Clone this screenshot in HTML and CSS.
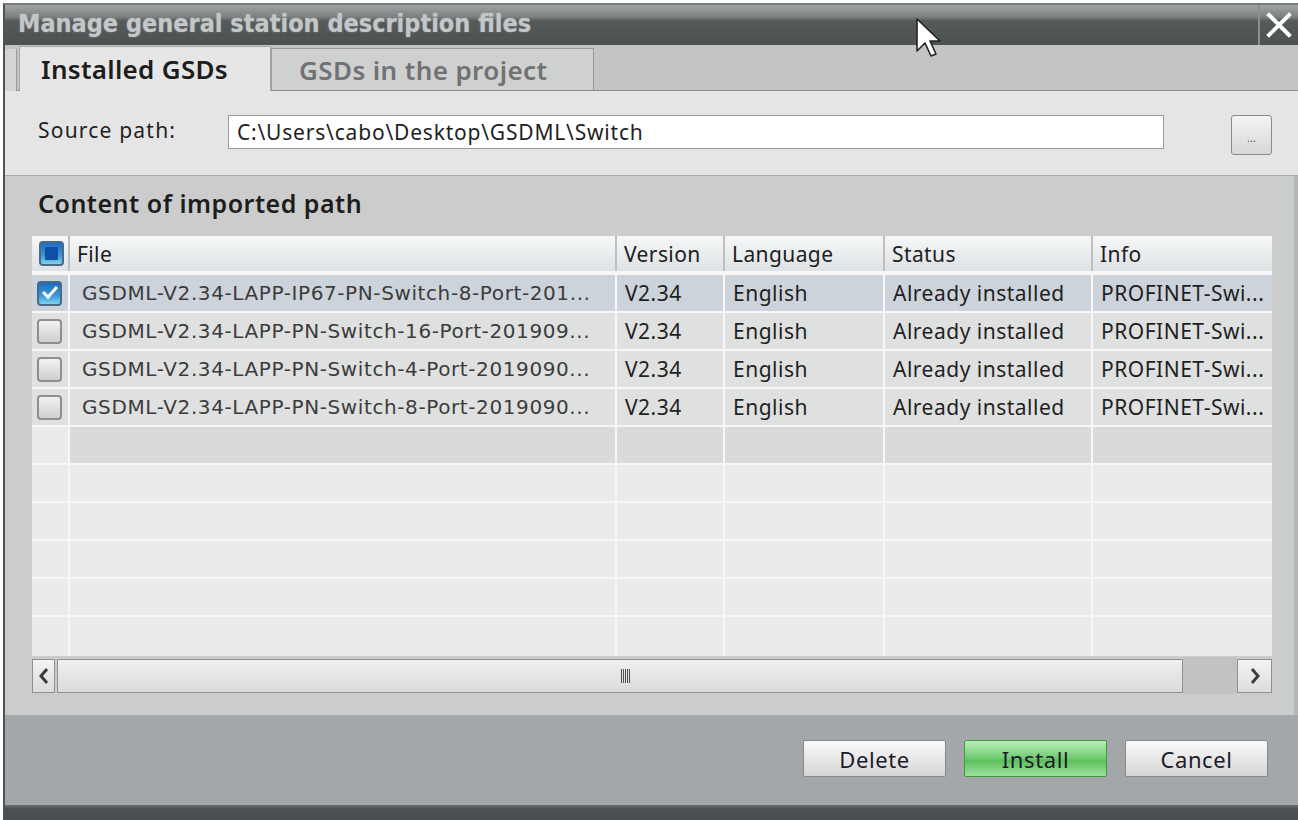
FILE: index.html
```html
<!DOCTYPE html>
<html lang="en">
<head>
<meta charset="utf-8">
<title>Manage general station description files</title>
<link rel="stylesheet" href="styles.css">
</head>
<body>
<div class="dialog">
  <div class="titlebar">
    <span class="title">Manage general station description files</span>
    <div class="close">
      <svg width="26" height="26" viewBox="0 0 26 26"><path d="M3 3 L23 23 M23 3 L3 23" stroke="#ffffff" stroke-width="4" stroke-linecap="square" fill="none"/></svg>
    </div>
  </div>
  <div class="tabs">
    <div class="tab-stub"></div>
    <div class="tab active">Installed GSDs</div>
    <div class="tab">GSDs in the project</div>
  </div>
  <div class="source">
    <span class="label">Source path:</span>
    <div class="path-input">C:\Users\cabo\Desktop\GSDML\Switch</div>
    <div class="browse">...</div>
  </div>
  <div class="content">
    <div class="heading">Content of imported path</div>
    <div class="grid">
      <div class="row head">
        <div class="cell chk"><span class="box tri"><span class="tri-in"></span></span></div>
        <div class="cell">File</div>
        <div class="cell">Version</div>
        <div class="cell">Language</div>
        <div class="cell">Status</div>
        <div class="cell">Info</div>
      </div>
      <div class="row data sel">
        <div class="cell chk"><span class="box on"><svg width="20" height="20" viewBox="0 0 20 20"><path d="M3 9 L8 14 L17 4" stroke="#ffffff" stroke-width="3" fill="none"/></svg></span></div>
        <div class="cell file">GSDML-V2.34-LAPP-IP67-PN-Switch-8-Port-201...</div>
        <div class="cell">V2.34</div>
        <div class="cell">English</div>
        <div class="cell">Already installed</div>
        <div class="cell">PROFINET-Swi...</div>
      </div>
      <div class="row data">
        <div class="cell chk"><span class="box"></span></div>
        <div class="cell file">GSDML-V2.34-LAPP-PN-Switch-16-Port-201909...</div>
        <div class="cell">V2.34</div>
        <div class="cell">English</div>
        <div class="cell">Already installed</div>
        <div class="cell">PROFINET-Swi...</div>
      </div>
      <div class="row data">
        <div class="cell chk"><span class="box"></span></div>
        <div class="cell file">GSDML-V2.34-LAPP-PN-Switch-4-Port-2019090...</div>
        <div class="cell">V2.34</div>
        <div class="cell">English</div>
        <div class="cell">Already installed</div>
        <div class="cell">PROFINET-Swi...</div>
      </div>
      <div class="row data">
        <div class="cell chk"><span class="box"></span></div>
        <div class="cell file">GSDML-V2.34-LAPP-PN-Switch-8-Port-2019090...</div>
        <div class="cell">V2.34</div>
        <div class="cell">English</div>
        <div class="cell">Already installed</div>
        <div class="cell">PROFINET-Swi...</div>
      </div>
      <div class="row empty first"><div class="cell chk"></div><div class="cell"></div><div class="cell"></div><div class="cell"></div><div class="cell"></div><div class="cell"></div></div>
      <div class="row empty"><div class="cell chk"></div><div class="cell"></div><div class="cell"></div><div class="cell"></div><div class="cell"></div><div class="cell"></div></div>
      <div class="row empty"><div class="cell chk"></div><div class="cell"></div><div class="cell"></div><div class="cell"></div><div class="cell"></div><div class="cell"></div></div>
      <div class="row empty"><div class="cell chk"></div><div class="cell"></div><div class="cell"></div><div class="cell"></div><div class="cell"></div><div class="cell"></div></div>
      <div class="row empty"><div class="cell chk"></div><div class="cell"></div><div class="cell"></div><div class="cell"></div><div class="cell"></div><div class="cell"></div></div>
      <div class="row empty last"><div class="cell chk"></div><div class="cell"></div><div class="cell"></div><div class="cell"></div><div class="cell"></div><div class="cell"></div></div>
    </div>
    <div class="hscroll">
      <div class="sbtn left"><svg width="14" height="18" viewBox="0 0 14 18"><path d="M10 2 L4 9 L10 16" stroke="#3c3c3c" stroke-width="3" fill="none"/></svg></div>
      <div class="track"><span class="grip"></span></div>
      <div class="sgap"></div>
      <div class="sbtn right"><svg width="14" height="18" viewBox="0 0 14 18"><path d="M4 2 L10 9 L4 16" stroke="#3c3c3c" stroke-width="3" fill="none"/></svg></div>
    </div>
  </div>
  <div class="footer">
    <div class="btn">Delete</div>
    <div class="btn install">Install</div>
    <div class="btn">Cancel</div>
  </div>
  <div class="bottombar"></div>
</div>
<svg class="cursor" width="28" height="44" viewBox="0 0 28 44">
  <path d="M2 2 L2 34 L10 26 L16 39 L21 37 L15 24 L25 24 Z" fill="#ffffff" stroke="#222222" stroke-width="1.6" stroke-linejoin="round"/>
</svg>
</body>
</html>
```
FILE: styles.css
```css
html, body {
  margin: 0;
  padding: 0;
  background: #ffffff;
  overflow: hidden;
}
body {
  width: 1298px;
  height: 820px;
  position: relative;
  font-family: "Noto Sans", "DejaVu Sans", sans-serif;
}
.dialog {
  margin: 3px 0 0 3px;
  border-left: 2px solid #4e5354;
  border-top: 2px solid #777b7c;
  height: 815px;
  display: flex;
  flex-direction: column;
  background: #cbcdcd;
}
.titlebar {
  height: 40px;
  flex: none;
  display: flex;
  align-items: center;
  background: linear-gradient(#a2a5a6 0px, #7b7f80 12px, #555a5b 16px, #4c5152 40px);
}
.title {
  flex: 1;
  padding-left: 13px;
  font-family: "DejaVu Sans", sans-serif;
  font-stretch: condensed;
  font-weight: bold;
  font-size: 25px;
  color: #c3c7c8;
  letter-spacing: 0;
  text-shadow: 0 0 2px rgba(255,255,255,0.35);
  margin-top: -4px;
}
.close {
  width: 38px;
  height: 40px;
  border-left: 2px solid #8b8f90;
  display: flex;
  align-items: center;
  justify-content: center;
}
.tabs {
  height: 45px;
  flex: none;
  display: flex;
  align-items: flex-end;
  background: #c3c5c5;
  border-bottom: 1px solid #8d8f8f;
  position: relative;
}
.tab-stub {
  width: 11px;
  height: 42px;
  background: #d3d4d4;
  border-right: 1px solid #9a9c9c;
  margin-bottom: -1px;
  align-self: flex-end;
}
.tab {
  height: 42px;
  display: flex;
  align-items: center;
  padding: 0 10px 0 27px;
  font-size: 26px;
  letter-spacing: 0.4px;
  font-weight: 600;
  color: #707273;
  background: #cfd0d0;
  border: 1px solid #9a9c9c;
  border-bottom: none;
  box-sizing: border-box;
  width: 323px;
  white-space: nowrap;
}
.tab.active {
  width: 252px;
  margin-left: 2px;
  height: 45px;
  margin-bottom: -1px;
  padding-left: 21px;
  letter-spacing: 0.3px;
  color: #1d1d1d;
  background: #e6e6e6;
  border-color: #a6a8a8;
}
.source {
  height: 84px;
  flex: none;
  display: flex;
  align-items: center;
  background: #e5e5e5;
  border-bottom: 1px solid #a9abab;
}
.label {
  width: 190px;
  padding-left: 33px;
  font-size: 21px;
  letter-spacing: 1.2px;
  color: #222;
  margin-top: -6px;
  white-space: nowrap;
}
.path-input {
  width: 926px;
  height: 32px;
  margin-top: -2px;
  background: #ffffff;
  border: 1px solid #9a9a9a;
  display: flex;
  align-items: center;
  padding-left: 8px;
  font-size: 21px;
  letter-spacing: 0.8px;
  color: #1e1e1e;
}
.browse {
  margin-left: 67px;
  width: 41px;
  height: 40px;
  box-sizing: border-box;
  border: 1px solid #8c8c8c;
  border-radius: 3px;
  background: linear-gradient(#f4f4f4, #d7d7d7);
  display: flex;
  align-items: flex-end;
  justify-content: center;
  font-size: 11px;
  color: #555;
  padding-bottom: 9px;
  margin-top: 4px;
}
.content {
  height: 539px;
  flex: none;
  padding: 12px 0 0 27px;
  box-sizing: border-box;
  background: #cbcdcd;
  border-right: 4px solid #b4b7b7;
  width: 1293px;
}
.heading {
  font-size: 25px;
  letter-spacing: 0.5px;
  font-weight: 600;
  color: #1d1d1d;
  height: 31px;
  line-height: 31px;
  padding-left: 6px;
  margin-bottom: 17px;
  white-space: nowrap;
}
.grid {
  width: 1240px;
  display: flex;
  flex-direction: column;
}
.row {
  display: grid;
  grid-template-columns: 38px 547px 108px 160px 208px 179px;
  height: 38px;
  box-sizing: border-box;
  border-bottom: 2px solid #f7f7f7;
}
.cell {
  display: flex;
  align-items: center;
  box-sizing: border-box;
  border-right: 2px solid #f7f7f7;
  padding-left: 8px;
  font-size: 21px;
  letter-spacing: 0.5px;
  color: #1f1f1f;
  white-space: nowrap;
  overflow: hidden;
}
.cell:last-child { border-right: none; }
.cell.chk {
  padding-left: 5px;
}
.row.head {
  height: 39px;
  border-bottom: 4px solid #f7f7f7;
  background: linear-gradient(#f5f7f8, #dfe2e4);
}
.row.head .cell {
  border-right: 2px solid #bcc0c3;
  font-size: 21px;
  letter-spacing: 0.4px;
  padding-left: 7px;
  color: #202020;
}
.row.head .cell:last-child { border-right: none; }
.row.data { background: #dfe0e0; }
.row.data.sel { background: #cdd3da; }
.cell.file {
  font-family: "DejaVu Sans", sans-serif;
  font-size: 20px;
  letter-spacing: 0.6px;
  color: #3c3c3c;
  padding-left: 12px;
}
.row.empty { background: #ebebeb; }
.row.empty.first { background: #d9dada; }
.row.empty.first .cell.chk { background: #ebebeb; }
.row.empty.last { height: 39px; border-bottom: none; }
.box {
  width: 25px;
  height: 25px;
  box-sizing: border-box;
  border: 2px solid #8c8e90;
  border-radius: 4px;
  background: linear-gradient(#f2f2f2, #cfcfcf);
  display: flex;
  align-items: center;
  justify-content: center;
}
.box.on, .box.tri {
  border-color: #4a6a86;
  background: linear-gradient(#1f6cc0, #3d97d8 60%, #7dd4ee);
}
.tri-in {
  width: 13px;
  height: 13px;
  background: #0f4fa6;
  border-radius: 1px;
}
.hscroll {
  margin-top: 1px;
  width: 1240px;
  height: 37px;
  display: flex;
  align-items: center;
}
.sbtn {
  width: 23px;
  height: 34px;
  box-sizing: border-box;
  border: 1px solid #8f9191;
  background: linear-gradient(#f4f4f4, #dcdcdc);
  display: flex;
  align-items: center;
  justify-content: center;
}
.sbtn.right { width: 35px; }
.track {
  margin-left: 2px;
  width: 1126px;
  height: 34px;
  box-sizing: border-box;
  border: 1px solid #8f9191;
  background: linear-gradient(#f0f0f0, #dadada);
  display: flex;
  align-items: center;
  justify-content: center;
}
.grip {
  width: 9px;
  height: 14px;
  margin-left: 10px;
  background: repeating-linear-gradient(90deg, #505050 0 1px, transparent 1px 2px);
}
.sgap { width: 54px; height: 37px; background: #c1c3c3; }
.footer {
  height: 90px;
  flex: none;
  display: flex;
  align-items: flex-start;
  justify-content: flex-end;
  gap: 18px;
  padding: 25px 30px 0 0;
  box-sizing: border-box;
  background: #a3a7a9;
}
.btn {
  width: 143px;
  height: 37px;
  box-sizing: border-box;
  border: 1px solid #868a8c;
  border-radius: 2px;
  background: linear-gradient(#fafafa, #e9e9e9 45%, #d6d6d6);
  display: flex;
  align-items: center;
  justify-content: center;
  font-size: 22px;
  letter-spacing: 0.6px;
  color: #1b1b2a;
}
.btn.install {
  border-color: #3d9c3d;
  background: linear-gradient(#b9ecb9, #6fcb6f 50%, #5bc05b 55%, #9ee09e);
}
.bottombar {
  flex: 1;
  background: linear-gradient(#6d7173, #4b4f51 4px);
}
.cursor {
  position: absolute;
  left: 915px;
  top: 17px;
}
```
